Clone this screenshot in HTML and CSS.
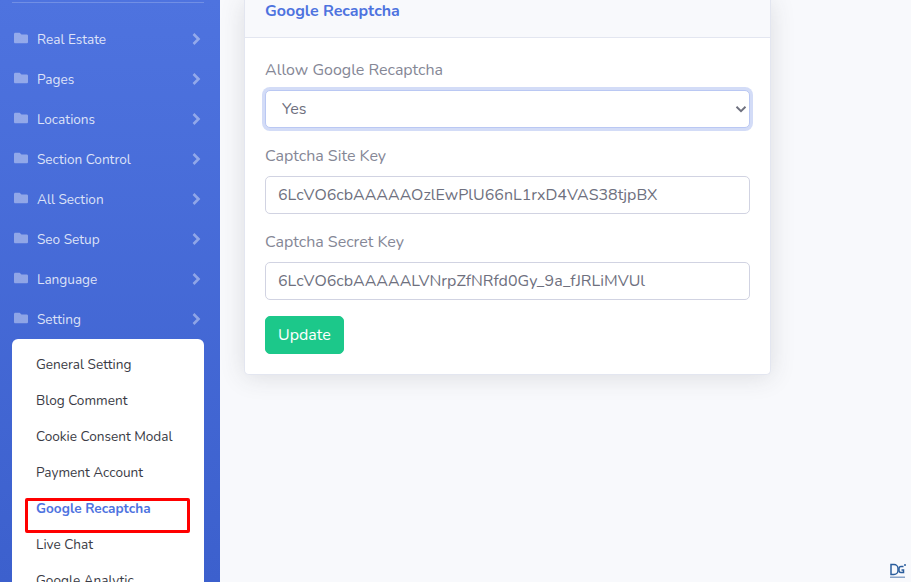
FILE: index.html
```html
<!DOCTYPE html>
<html lang="en">
<head>
<meta charset="utf-8">
<title>Google Recaptcha</title>
<link rel="stylesheet" href="styles.css">
</head>
<body>
<div class="page">
  <aside class="sidebar">
    <hr class="divider">
    <nav class="nav">
      <a class="nav-item"><svg class="folder" viewBox="0 0 512 512"><path d="M464 128H272l-64-64H48C21.490 64 0 85.490 0 112v288c0 26.510 21.490 48 48 48h416c26.510 0 48-21.490 48-48V176c0-26.510-21.490-48-48-48z"/></svg><span class="nav-label">Real Estate</span><svg class="chev" viewBox="0 0 10 14"><path d="M2.500 2l5 5-5 5"/></svg></a>
      <a class="nav-item"><svg class="folder" viewBox="0 0 512 512"><path d="M464 128H272l-64-64H48C21.490 64 0 85.490 0 112v288c0 26.510 21.490 48 48 48h416c26.510 0 48-21.490 48-48V176c0-26.510-21.490-48-48-48z"/></svg><span class="nav-label">Pages</span><svg class="chev" viewBox="0 0 10 14"><path d="M2.500 2l5 5-5 5"/></svg></a>
      <a class="nav-item"><svg class="folder" viewBox="0 0 512 512"><path d="M464 128H272l-64-64H48C21.490 64 0 85.490 0 112v288c0 26.510 21.490 48 48 48h416c26.510 0 48-21.490 48-48V176c0-26.510-21.490-48-48-48z"/></svg><span class="nav-label">Locations</span><svg class="chev" viewBox="0 0 10 14"><path d="M2.500 2l5 5-5 5"/></svg></a>
      <a class="nav-item"><svg class="folder" viewBox="0 0 512 512"><path d="M464 128H272l-64-64H48C21.490 64 0 85.490 0 112v288c0 26.510 21.490 48 48 48h416c26.510 0 48-21.490 48-48V176c0-26.510-21.490-48-48-48z"/></svg><span class="nav-label">Section Control</span><svg class="chev" viewBox="0 0 10 14"><path d="M2.500 2l5 5-5 5"/></svg></a>
      <a class="nav-item"><svg class="folder" viewBox="0 0 512 512"><path d="M464 128H272l-64-64H48C21.490 64 0 85.490 0 112v288c0 26.510 21.490 48 48 48h416c26.510 0 48-21.490 48-48V176c0-26.510-21.490-48-48-48z"/></svg><span class="nav-label">All Section</span><svg class="chev" viewBox="0 0 10 14"><path d="M2.500 2l5 5-5 5"/></svg></a>
      <a class="nav-item"><svg class="folder" viewBox="0 0 512 512"><path d="M464 128H272l-64-64H48C21.490 64 0 85.490 0 112v288c0 26.510 21.490 48 48 48h416c26.510 0 48-21.490 48-48V176c0-26.510-21.490-48-48-48z"/></svg><span class="nav-label">Seo Setup</span><svg class="chev" viewBox="0 0 10 14"><path d="M2.500 2l5 5-5 5"/></svg></a>
      <a class="nav-item"><svg class="folder" viewBox="0 0 512 512"><path d="M464 128H272l-64-64H48C21.490 64 0 85.490 0 112v288c0 26.510 21.490 48 48 48h416c26.510 0 48-21.490 48-48V176c0-26.510-21.490-48-48-48z"/></svg><span class="nav-label">Language</span><svg class="chev" viewBox="0 0 10 14"><path d="M2.500 2l5 5-5 5"/></svg></a>
      <a class="nav-item"><svg class="folder" viewBox="0 0 512 512"><path d="M464 128H272l-64-64H48C21.490 64 0 85.490 0 112v288c0 26.510 21.490 48 48 48h416c26.510 0 48-21.490 48-48V176c0-26.510-21.490-48-48-48z"/></svg><span class="nav-label">Setting</span><svg class="chev" viewBox="0 0 10 14"><path d="M2.500 2l5 5-5 5"/></svg></a>
    </nav>
    <div class="submenu">
      <a class="sub-item">General Setting</a>
      <a class="sub-item">Blog Comment</a>
      <a class="sub-item">Cookie Consent Modal</a>
      <a class="sub-item">Payment Account</a>
      <a class="sub-item active">Google Recaptcha<span class="highlight"></span></a>
      <a class="sub-item">Live Chat</a>
      <a class="sub-item">Google Analytic</a>
    </div>
  </aside>
  <main class="main">
    <section class="card">
      <header class="card-header">Google Recaptcha</header>
      <form class="card-body">
        <div class="field">
          <label class="label">Allow Google Recaptcha</label>
          <div class="select focus"><span>Yes</span><svg class="caret" viewBox="0 0 16 16"><path d="M2 5l6 6 6-6"/></svg></div>
        </div>
        <div class="field">
          <label class="label">Captcha Site Key</label>
          <div class="input">6LcVO6cbAAAAAOzlEwPlU66nL1rxD4VAS38tjpBX</div>
        </div>
        <div class="field">
          <label class="label">Captcha Secret Key</label>
          <div class="input">6LcVO6cbAAAAALVNrpZfNRfd0Gy_9a_fJRLiMVUl</div>
        </div>
        <button class="btn" type="button">Update</button>
      </form>
    </section>
  </main>
  <svg class="badge" viewBox="0 0 18 16"><path class="badge-d" d="M2 1.500h3a4 4 0 0 1 4 4v2a4 4 0 0 1-4 4H2z"/><path class="badge-g" d="M14.500 3.500h-2.500a2 2 0 0 0-2 2v2a2 2 0 0 0 2 2h2.500V7h-2"/><circle class="badge-dot" cx="16" cy="2" r="1"/><rect class="badge-dot" x="1" y="13.500" width="15" height="1.500" opacity=".55"/></svg>
</div>
</body>
</html>
```
FILE: styles.css
```css
* { box-sizing: border-box; }
html, body { margin: 0; height: 100%; overflow: hidden; }
body { font-family: "Nunito", "Lato", "Noto Sans", sans-serif; background: #f8f9fc; }
.page { display: flex; width: 911px; height: 582px; overflow: hidden; position: relative; }

.sidebar {
  width: 220px; flex: none; height: 582px; overflow: hidden;
  padding: 0 16px 0 12px;
  background: linear-gradient(180deg, #4e73df 0%, #3c60cd 100%);
}
.divider { height: 1px; border: 0; margin: 2px 0 0; background: rgba(255,255,255,.2); width: 192px; }
.nav { margin: 16px -16px 0 -12px; }
.nav-item { display: flex; align-items: center; height: 40px; padding: 0 19px 0 14px; color: rgba(255,255,255,.82); font-size: 13.6px; }
.folder { width: 14px; height: 14px; fill: rgba(255,255,255,.4); flex: none; margin-top: -3px; }
.nav-label { margin-left: 9px; flex: 1; }
.chev { width: 10px; height: 14px; fill: none; stroke: rgba(255,255,255,.4); stroke-width: 2.600; flex: none; margin-top: -1px; }

.submenu { width: 192px; background: #fff; border-radius: 6px 6px 0 0; padding: 8px 0 0 24px; height: 300px; }
.sub-item { display: block; height: 36px; line-height: 36px; font-size: 13.6px; color: #3a3b45; position: relative; white-space: nowrap; }
.sub-item.active { color: #4e73df; font-weight: 700; }
.highlight { position: absolute; left: -11px; top: 7px; width: 165px; height: 35px; border: 3px solid #f00; border-radius: 2px; }

.main { flex: 1; padding: 0 0 0 24px; min-width: 0; }
.card { width: 527px; height: 375px; background: #fff; border: 1px solid #e3e6f0; border-top: 0; border-radius: 0 0 5px 5px; box-shadow: 0 2px 24px rgba(58,59,69,.15); }
.card-header { height: 38px; padding: 0 20px; background: #f8f9fc; border-bottom: 1px solid #e3e6f0; color: #4e73df; font-weight: 700; font-size: 16px; line-height: 22px; }
.card-body { padding: 20px; }
.field { margin-bottom: 16px; }
.label { display: block; height: 24px; line-height: 24px; margin-bottom: 8px; color: #858796; font-size: 16px; }
.select, .input { height: 38px; width: 485px; border: 1px solid #d1d3e2; border-radius: 5px; padding: 0 12px; display: flex; align-items: center; color: #6e707e; font-size: 16px; background: #fff; white-space: nowrap; }
.select { justify-content: space-between; padding: 0 2px 0 16px; border-color: #bac8f3; box-shadow: 0 0 0 3px rgba(78,115,223,.25); }
.caret { width: 12px; height: 12px; fill: none; stroke: #6e707e; stroke-width: 2.500; }
.btn { display: block; height: 38px; padding: 0 12px; border: 1px solid #1cc88a; border-radius: 5px; background: #1cc88a; color: #fff; font: inherit; font-size: 16px; }

.badge { position: absolute; left: 889px; top: 563px; width: 18px; height: 16px; fill: none; stroke: #2a5d9c; stroke-width: 1.500; }
.badge-dot { fill: #2a5d9c; stroke: none; }
```
